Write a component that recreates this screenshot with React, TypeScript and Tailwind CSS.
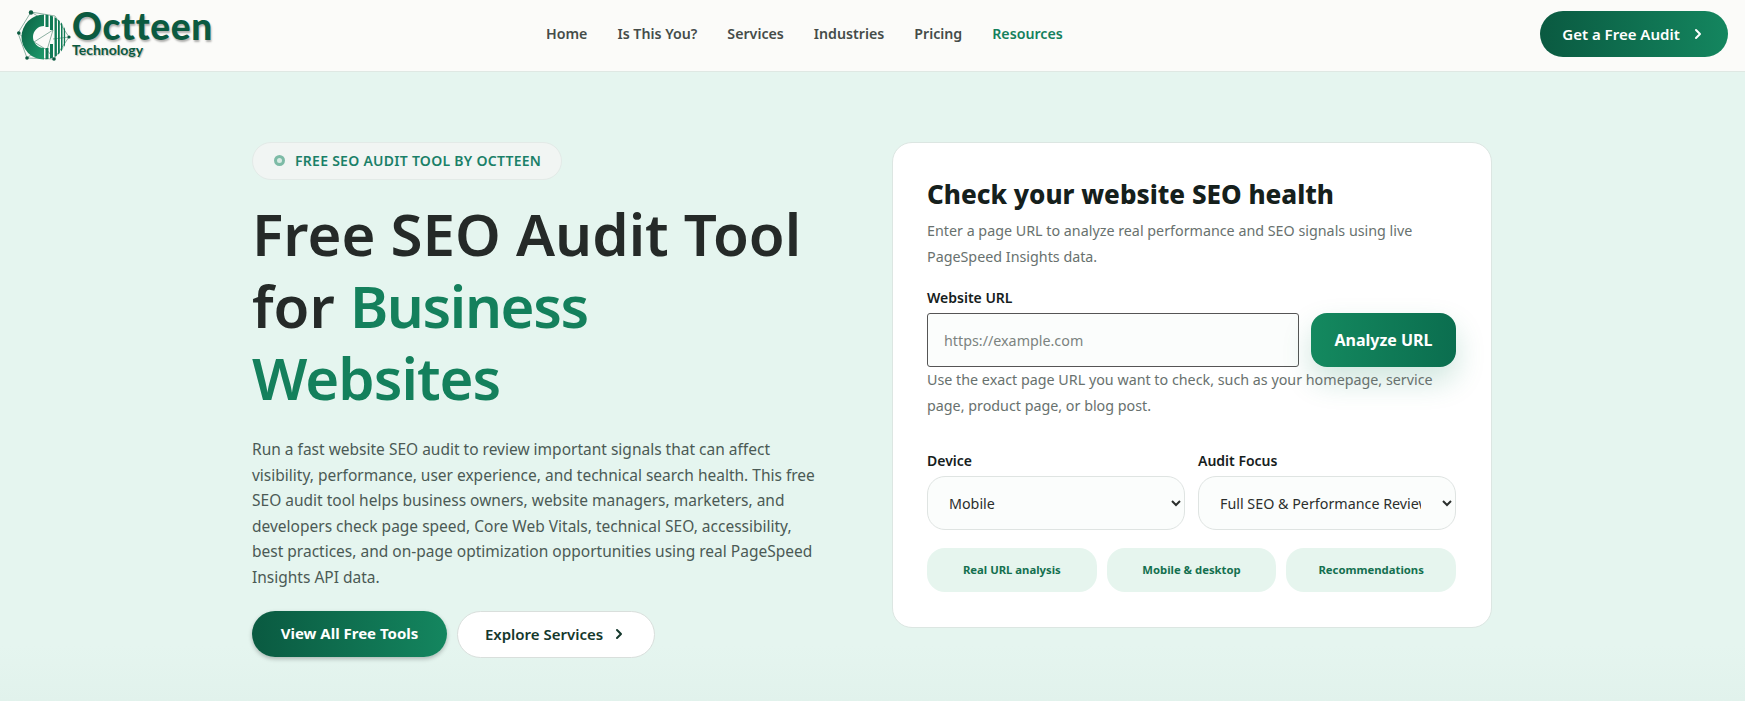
import { ChevronRight } from "lucide-react";

const font = "font-['Noto_Sans','Open_Sans',sans-serif]";

const navLinks = ["Home", "Is This You?", "Services", "Industries", "Pricing"];
const chips = ["Real URL analysis", "Mobile & desktop", "Recommendations"];

const LogoMark = () => (
  <svg width="56" height="52" viewBox="0 0 56 52" className="shrink-0">
    <defs>
      <linearGradient id="cfill" x1="0" y1="0" x2="1" y2="1">
        <stop offset="0" stopColor="#0a5f42" />
        <stop offset="1" stopColor="#1d9a6b" />
      </linearGradient>
      <clipPath id="right-half">
        <circle cx="27" cy="27" r="22.5" />
      </clipPath>
    </defs>
    <g stroke="#5d8f7c" strokeWidth="0.7" fill="none">
      <path d="M14 2 L1 23 L10 48 L37 49 L52 27 L38 6 L14 2" />
      <path d="M14 2 L27 10 M1 23 L6 27 M10 48 L20 40 M37 49 L30 40 L17 32 L36 20 L30 40 M36 29 L52 27" />
    </g>
    <path d="M27 4.5 A22.5 22.5 0 0 0 27 49.5 L27 38 A11 11 0 0 1 27 16 Z" fill="url(#cfill)" />
    <g clipPath="url(#right-half)" fill="#0f7a55">
      <rect x="28.5" y="4" width="3" height="13" />
      <rect x="33" y="4" width="3" height="16" />
      <rect x="37.5" y="4" width="2.4" height="46" />
      <rect x="41" y="4" width="1.8" height="46" />
      <rect x="44" y="4" width="1.5" height="46" />
      <rect x="46.8" y="4" width="1.3" height="46" />
      <rect x="33" y="34" width="3" height="16" />
      <rect x="28.5" y="38" width="3" height="12" />
    </g>
    <g fill="#0b5a40">
      <circle cx="14" cy="2.5" r="2.2" />
      <circle cx="1.8" cy="23" r="1.8" />
      <circle cx="10" cy="48" r="1.8" />
      <circle cx="37" cy="49" r="1.8" />
      <circle cx="52" cy="27" r="1.6" />
    </g>
  </svg>
);

const Header = () => (
  <header className="h-[72px] bg-[#fbfbf9] border-b border-[#dfe8e3] flex items-center justify-between px-[17px] relative">
    <div className="flex items-center">
      <LogoMark />
      <div className="-ml-[1px] mb-[5px] flex flex-col font-['Lato',sans-serif] text-[#0b5a40]">
        <span className="text-[37px] font-black leading-[33px] tracking-[0.7px] [text-shadow:1px_2px_2px_rgba(0,0,0,0.3)]">Octteen</span>
        <span className="text-[14px] font-bold leading-[15px] [text-shadow:1px_1px_1px_rgba(0,0,0,0.25)]">Technology</span>
      </div>
    </div>
    <nav className="absolute left-[546px] top-0 h-[67px] flex items-center gap-[30px] text-[14.2px] font-semibold text-[#454c49]">
      {navLinks.map((l) => (
        <a key={l}>{l}</a>
      ))}
      <a className="text-[#14805c]">Resources</a>
    </nav>
    <a className="mb-[3px] h-[46px] w-[188px] rounded-full bg-gradient-to-r from-[#0a5a41] to-[#14865f] text-white font-semibold text-[15px] flex items-center justify-center gap-[10px]">
      Get a Free Audit
      <ChevronRight size={16} strokeWidth={3} />
    </a>
  </header>
);

const Intro = () => (
  <div className="w-[590px]">
    <div className="inline-flex items-center gap-[10px] h-[38px] w-[310px] pl-[21px] pb-[1px] rounded-full border border-[#e3eae7] bg-[#f1f5f3]">
      <span className="w-[11px] h-[11px] rounded-full border-[3px] border-[#7dbba6] bg-[#d9ebe4]" />
      <span className="text-[14px] font-semibold tracking-[0.27px] text-[#1a8068]">FREE SEO AUDIT TOOL BY OCTTEEN</span>
    </div>
    <h1 className="mt-[18px] text-[58.2px] leading-[72px] font-semibold text-[#252a28]">
      Free SEO Audit Tool
      <br />
      for <span className="text-[#14805c] tracking-[-1.4px]">Business</span>
      <br />
      <span className="text-[#14805c] tracking-[-1px]">Websites</span>
    </h1>
    <p className="mt-[23px] w-[572px] text-[15.5px] leading-[25.6px] text-[#4b5a55]">
      Run a fast website SEO audit to review important signals that can affect
      visibility, performance, user experience, and technical search health. This free
      SEO audit tool helps business owners, website managers, marketers, and
      developers check page speed, Core Web Vitals, technical SEO, accessibility,
      best practices, and on-page optimization opportunities using real PageSpeed
      Insights API data.
    </p>
    <div className="mt-[20px] flex gap-[10px]">
      <a className="h-[46px] w-[195px] rounded-full bg-gradient-to-r from-[#0a5a41] to-[#14865f] text-white font-bold text-[15px] flex items-center justify-center shadow-[0_2px_4px_rgba(0,0,0,0.25)]">
        View All Free Tools
      </a>
      <a className="h-[47px] w-[198px] rounded-full bg-white border border-[#d9dfdc] text-[#14382c] font-semibold text-[15px] flex items-center justify-center gap-[8px]">
        Explore Services
        <ChevronRight size={16} strokeWidth={3} />
      </a>
    </div>
  </div>
);

const AuditCard = () => (
  <div className="w-[600px] h-[486px] rounded-[20px] bg-white border border-[#dce6e2] pl-[34px] pr-[35px] pt-[33px]">
    <h2 className="text-[26px] leading-[36px] font-extrabold text-[#15201c]">Check your website SEO health</h2>
    <p className="mt-[6px] text-[14.3px] leading-[25.6px] text-[#68716e]">
      Enter a page URL to analyze real performance and SEO signals using live
      <br />
      PageSpeed Insights data.
    </p>
    <label className="block mt-[19px] text-[14px] leading-[20px] font-semibold text-[#15201c]">Website URL</label>
    <div className="mt-[5px] flex gap-[12px]">
      <input
        placeholder="https://example.com"
        className="w-[372px] h-[54px] rounded-[3px] border border-[#555] bg-[#fbfdfc] px-[16px] text-[14.3px] placeholder:text-[#7b8380] outline-none"
      />
      <button className="w-[145px] h-[54px] rounded-[16px] bg-gradient-to-r from-[#14895f] to-[#0b6e4f] text-white font-bold text-[16px] shadow-[0_14px_30px_rgba(15,130,90,0.2)]">
        Analyze URL
      </button>
    </div>
    <p className="mt-0 text-[14.3px] leading-[25.6px] text-[#68716e]">
      Use the exact page URL you want to check, such as your homepage, service
      <br />
      page, product page, or blog post.
    </p>
    <div className="mt-[33px] grid grid-cols-2 gap-x-[13px]">
      {[
        { label: "Device", value: "Mobile" },
        { label: "Audit Focus", value: "Full SEO & Performance Review" },
      ].map((f) => (
        <div key={f.label}>
          <label className="block text-[14px] leading-[20px] font-semibold text-[#15201c]">{f.label}</label>
          <select className="mt-[5px] w-full h-[54px] rounded-[18px] border border-[#dfe4e2] bg-[#fbfdfc] pl-[17px] pr-[18px] text-[14.3px] text-[#2b2f2d]">
            <option>{f.value}</option>
          </select>
        </div>
      ))}
    </div>
    <div className="mt-[18px] grid grid-cols-3 gap-[10px]">
      {chips.map((c) => (
        <div key={c} className="h-[44px] rounded-[18px] bg-[#e6f5ee] text-[#14704f] text-[11.3px] font-bold flex items-center justify-center">
          {c}
        </div>
      ))}
    </div>
  </div>
);

export default function App() {
  return (
    <div className={`${font} h-[701px] overflow-hidden bg-[linear-gradient(#e5f5ef_0%,#e5f5ef_92%,#e1f2ec_100%)]`}>
      <Header />
      <main className="flex justify-between w-[1240px] ml-[252px] pt-[70px]">
        <Intro />
        <AuditCard />
      </main>
    </div>
  );
}
